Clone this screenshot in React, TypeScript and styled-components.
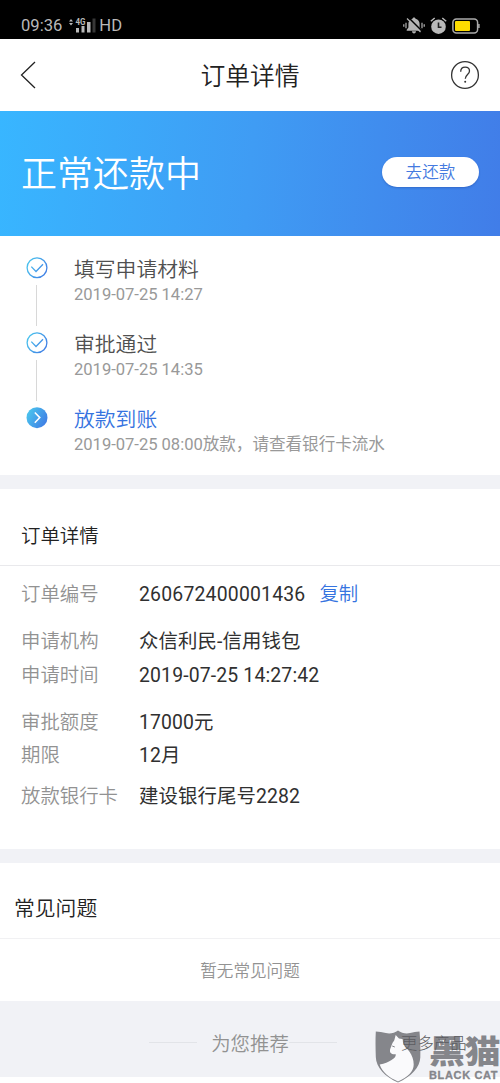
import React from "react";
import styled, { createGlobalStyle } from "styled-components";

const Global = createGlobalStyle`
  * { box-sizing: border-box; }
  html, body { margin: 0; background: #fff; }
  body {
    font-family: Roboto, "Noto Sans CJK SC", sans-serif;
    color: #333;
    overflow: hidden;
  }
  h1, h2, p { margin: 0; font-weight: 400; }
  button { border: 0; background: none; padding: 0; font: inherit; }
  svg { display: block; flex: none; }
`;

const Page = styled.main`
  position: relative;
  width: 500px;
  height: 1083px;
  display: flex;
  flex-direction: column;
  overflow: hidden;
`;

const StatusBar = styled.div`
  height: 39px;
  flex: none;
  background: #000;
  color: #b9b9b9;
  display: flex;
  align-items: center;
  justify-content: space-between;
  padding: 12px 20px 0 21px;
  font-size: 16.6px;
  line-height: 20px;
`;

const StatusGroup = styled.div<{ $gap: number }>`
  display: flex;
  align-items: center;
  gap: ${(p) => p.$gap}px;
`;

const Header = styled.header`
  height: 72px;
  flex: none;
  display: flex;
  align-items: center;
  justify-content: space-between;
  padding: 0 20px;
`;

const HeaderTitle = styled.h1`
  padding-top: 4px;
  font-weight: 350;
  font-size: 24.8px;
  line-height: 36px;
  color: #222;
`;

const IconButton = styled.button`
  width: 30px;
  height: 30px;
  display: flex;
  align-items: center;
`;

const Hero = styled.section`
  height: 125px;
  flex: none;
  display: flex;
  align-items: center;
  justify-content: space-between;
  padding: 0 21px;
  background: linear-gradient(95deg, #38b6ff 0%, #3f9cf4 50%, #417de8 100%);
`;

const HeroTitle = styled.h2`
  padding-top: 3px;
  font-weight: 350;
  font-size: 36px;
  line-height: 50px;
  color: #fff;
`;

const PayButton = styled.button`
  width: 97px;
  height: 30px;
  margin-bottom: 4px;
  padding-top: 2px;
  border-radius: 15px;
  background: #fff;
  color: #447ae0;
  font-size: 16.6px;
  line-height: 28px;
  font-weight: 350;
  box-shadow: 0 1px 2px rgba(30, 70, 160, 0.45);
`;

const Timeline = styled.section`
  height: 239px;
  flex: none;
  padding: 21px 0 0 25.5px;
`;

const Step = styled.div`
  height: 75px;
  display: flex;
  gap: 26.5px;
`;

const StepRail = styled.div`
  width: 22px;
  display: flex;
  flex-direction: column;
  align-items: center;
`;

const RailLine = styled.div`
  width: 1px;
  height: 41px;
  margin-top: 6px;
  background: #d8d8d8;
`;

const StepTitle = styled.p<{ $active?: boolean }>`
  padding-top: 1px;
  font-size: 20.8px;
  line-height: 24px;
  font-weight: 350;
  color: ${(p) => (p.$active ? "#3573e0" : "#505050")};
`;

const StepNote = styled.p`
  margin-top: 2px;
  font-size: 16.6px;
  line-height: 22px;
  letter-spacing: -0.03px;
  color: #999;
`;

const Divider = styled.div`
  height: 14px;
  flex: none;
  background: #f1f2f6;
`;

const SectionTitle = styled.h2<{ $size: number; $inset: number; $top: number; $height: number; $line: string }>`
  height: ${(p) => p.$height}px;
  flex: none;
  display: flex;
  align-items: center;
  padding: ${(p) => p.$top}px 0 0 ${(p) => p.$inset}px;
  font-size: ${(p) => p.$size}px;
  font-weight: 350;
  color: #222;
  border-bottom: 1px solid ${(p) => p.$line};
`;

const Details = styled.section`
  height: 283px;
  flex: none;
  padding: 16px 21px 0;
`;

const DetailRow = styled.div<{ $after: number }>`
  display: flex;
  height: 26px;
  line-height: 26px;
  margin-bottom: ${(p) => p.$after}px;
  font-size: 19.4px;
`;

const DetailLabel = styled.span`
  width: 118px;
  font-weight: 350;
  color: #929292;
`;

const DetailValue = styled.span<{ $spacing: number }>`
  color: #303030;
  letter-spacing: ${(p) => p.$spacing}px;
`;

const CopyButton = styled.button`
  margin-left: 14px;
  font-weight: 350;
  color: #3573e0;
`;

const Empty = styled.div`
  height: 62px;
  flex: none;
  display: flex;
  align-items: center;
  justify-content: center;
  font-size: 16.6px;
  font-weight: 350;
  color: #929292;
`;

const Recommend = styled.section`
  height: 76px;
  flex: none;
  display: flex;
  align-items: center;
  justify-content: center;
  padding-top: 6px;
  background: #f1f2f6;
  font-size: 19.4px;
  font-weight: 350;
  color: #929292;
`;

const Rule = styled.span`
  width: 48px;
  height: 1px;
  background: #e2e4e8;
  margin-right: 14px;
`;

const MoreLink = styled.span`
  position: absolute;
  left: 401px;
  top: 1033px;
  font-size: 16.4px;
  line-height: 22px;
  font-weight: 300;
  color: #5c5c60;
`;

const Watermark = styled.div`
  position: absolute;
  left: 375px;
  top: 1030px;
  display: flex;
  gap: 8px;
  color: #85868b;
`;

const WatermarkText = styled.div`
  display: flex;
  flex-direction: column;
  white-space: nowrap;
`;

const WatermarkName = styled.span`
  font-size: 32px;
  line-height: 38px;
  font-weight: 900;
  font-family: "Noto Sans CJK SC", sans-serif;
  transform: scaleX(1.12);
  transform-origin: left;
`;

const WatermarkLatin = styled.span`
  margin-top: 1px;
  font-family: "Liberation Sans", sans-serif;
  font-weight: 700;
  font-size: 11px;
  line-height: 12px;
  letter-spacing: 0.65px;
  -webkit-text-stroke: 0.3px #85868b;
`;

const SignalIcon = () => (
  <svg width="28" height="17" viewBox="0 0 28 17" fill="#b9b9b9">
    <path d="M0 4.500 2 2 4 4.500ZM0 6 2 8.500 4 6Z" />
    <text x="6.500" y="7.500" fontSize="8.500" fontWeight="700" fontFamily="Roboto" textLength="10" lengthAdjust="spacingAndGlyphs">4G</text>
    <rect x="7" y="11" width="3" height="4.500" />
    <rect x="12.500" y="9" width="3" height="6.500" />
    <rect x="18" y="5" width="3.500" height="10.500" />
    <rect x="23.500" y="1.500" width="3" height="14" fill="#373737" />
  </svg>
);

const MutedBellIcon = () => (
  <svg width="22" height="17" viewBox="0 0 22 17">
    <path d="M11 .5c.9 0 1.500.6 1.500 1.300 2.800.7 4.100 2.700 4.100 5.200v3.500l1.700 2.200v1H3.700v-1l1.700-2.200V7c0-2.500 1.300-4.500 4.100-5.200C9.500 1.100 10.100.5 11 .5ZM9 14.300h4c0 1.300-.9 2.200-2 2.200s-2-.9-2-2.200Z" fill="#b4b4b4" />
    <path d="M5.700.700 18.700 13.700" stroke="#000" strokeWidth="1.500" />
    <path d="M4 1.500 17.500 15" stroke="#b4b4b4" strokeWidth="1.300" />
    <path d="M.8 7.200v2.600M3 5.800v5.400M19 5.800v5.400M21.200 7.200v2.600" stroke="#b4b4b4" strokeWidth="1.200" />
  </svg>
);

const AlarmIcon = () => (
  <svg width="17" height="18" viewBox="0 0 17 18">
    <circle cx="8.500" cy="9.700" r="7.300" fill="#b9b9b9" />
    <path d="M.8 4.300 4.700 1M16.200 4.300 12.300 1" stroke="#b9b9b9" strokeWidth="1.500" />
    <path d="M8.500 5.500v4.700h3" fill="none" stroke="#222" strokeWidth="1.600" />
  </svg>
);

const BatteryIcon = () => (
  <svg width="28" height="16" viewBox="0 0 28 16">
    <rect x=".9" y=".9" width="24.700" height="14.200" rx="3.500" fill="#000" stroke="#aaa" strokeWidth="1.500" />
    <rect x="3" y="3" width="15" height="10" rx="1" fill="#fddc00" />
    <path d="M26.900 6v4" stroke="#aaa" strokeWidth="1.500" />
  </svg>
);

const BackIcon = () => (
  <svg width="16" height="28" viewBox="0 0 16 28">
    <path d="M15 1 1.500 14 15 27" fill="none" stroke="#222" strokeWidth="1.300" />
  </svg>
);

const HelpIcon = () => (
  <svg width="30" height="30" viewBox="0 0 30 30" fill="none" stroke="#333">
    <circle cx="15" cy="15" r="13.400" strokeWidth="1.300" />
    <path d="M10.700 11.700c0-2.800 1.900-4.500 4.500-4.500 2.500 0 4.300 1.600 4.300 3.900 0 3.400-4.200 3.600-4.200 7.700" strokeWidth="1.300" />
    <circle cx="15.200" cy="21.800" r="1" fill="#333" stroke="none" />
  </svg>
);

const StepIcon = ({ id, active }: { id: string; active?: boolean }) => (
  <svg width="22" height="22" viewBox="0 0 22 22" fill="none">
    <defs>
      <linearGradient id={id} x1="0" y1="5" x2="22" y2="17" gradientUnits="userSpaceOnUse">
        <stop stopColor="#4bc8ee" />
        <stop offset="1" stopColor="#3f78e4" />
      </linearGradient>
    </defs>
    {active ? (
      <>
        <circle cx="11" cy="10.700" r="10.500" fill={`url(#${id})`} />
        <path d="m8.800 5.500 5 5.100-5 5.100" stroke="#fff" strokeWidth="1.500" />
      </>
    ) : (
      <>
        <circle cx="11" cy="10.700" r="9.900" stroke={`url(#${id})`} strokeWidth="1.300" />
        <path d="m5.300 9.600 4.700 4.900 7-7.300" stroke={`url(#${id})`} strokeWidth="1.300" />
      </>
    )}
  </svg>
);

const CatShield = () => (
  <svg width="46" height="53" viewBox="0 0 46 53">
    <path d="M23 .5c3.500 2.700 8 3.500 12 2.600 3.500-.7 6-1.500 9.500-1.600.8 9 1 17 .8 26C45 37 36 47 23 52.500 10 47 1 37 .8 27 .6 18 .3 10 .8 1.500c3.500 0 6.500.9 10 1.600 4.200.9 8.700.1 12.200-2.600Z" fill="#85868b" />
    <path d="M20.700 5 24 8.600l3.200.3c.9.300.6 2.300.8 3.600.6 3 4.500 6 6.700 9.500 2.300 3.600 4 7.500 4 12.500 0 7-5.700 12.500-15.700 17C13.500 47.300 7.200 42 4.700 34.500c5.300-.5 8.300-2.500 11.800-4.500 2.700-1.600 4.500-3.200 4.300-5.700-2 .2-4.600-.2-5.500-1.800-.7-1.400-.3-3.300.7-5.500.6-1.400.8-2.800 1.500-4 .9-1.700 1.700-2 2-3.500Z" fill="#fafafc" />
    <path d="m17.200 16 2.600 1" stroke="#85868b" strokeWidth="1" />
  </svg>
);

const steps = [
  { title: "填写申请材料", note: "2019-07-25 14:27" },
  { title: "审批通过", note: "2019-07-25 14:35" },
  { title: "放款到账", note: "2019-07-25 08:00放款，请查看银行卡流水", active: true },
];

const details = [
  { label: "订单编号", value: "260672400001436", after: 21, spacing: 0.2, copy: true },
  { label: "申请机构", value: "众信利民-信用钱包", after: 7.5, spacing: 0.1 },
  { label: "申请时间", value: "2019-07-25 14:27:42", after: 21, spacing: 0.15 },
  { label: "审批额度", value: "17000元", after: 7.5, spacing: 0.1 },
  { label: "期限", value: "12月", after: 14.5, spacing: 0.1 },
  { label: "放款银行卡", value: "建设银行尾号2282", after: 0, spacing: 0.1 },
];

export default function App() {
  return (
    <Page>
      <Global />
      <StatusBar>
        <StatusGroup $gap={7}>
          <span>09:36</span>
          <StatusGroup $gap={2}>
            <SignalIcon />
            <span>HD</span>
          </StatusGroup>
        </StatusGroup>
        <StatusGroup $gap={5}>
          <MutedBellIcon />
          <AlarmIcon />
          <BatteryIcon />
        </StatusGroup>
      </StatusBar>
      <Header>
        <IconButton aria-label="返回"><BackIcon /></IconButton>
        <HeaderTitle>订单详情</HeaderTitle>
        <IconButton aria-label="帮助"><HelpIcon /></IconButton>
      </Header>
      <Hero>
        <HeroTitle>正常还款中</HeroTitle>
        <PayButton>去还款</PayButton>
      </Hero>
      <Timeline>
        {steps.map((s, i) => (
          <Step key={s.title}>
            <StepRail>
              <StepIcon id={`step${i}`} active={s.active} />
              {!s.active && <RailLine />}
            </StepRail>
            <div>
              <StepTitle $active={s.active}>{s.title}</StepTitle>
              <StepNote>{s.note}</StepNote>
            </div>
          </Step>
        ))}
      </Timeline>
      <Divider />
      <SectionTitle $size={19.4} $inset={21} $top={14} $height={77} $line="#e9e9ec">订单详情</SectionTitle>
      <Details>
        {details.map((d) => (
          <DetailRow key={d.label} $after={d.after}>
            <DetailLabel>{d.label}</DetailLabel>
            <DetailValue $spacing={d.spacing}>{d.value}</DetailValue>
            {d.copy && <CopyButton>复制</CopyButton>}
          </DetailRow>
        ))}
      </Details>
      <Divider />
      <SectionTitle $size={20.8} $inset={14} $top={13} $height={76} $line="#f1f1f3">常见问题</SectionTitle>
      <Empty>暂无常见问题</Empty>
      <Recommend>
        <Rule />
        <span>为您推荐</span>
        <Rule />
      </Recommend>
      <Watermark>
        <CatShield />
        <WatermarkText>
          <WatermarkName>黑猫</WatermarkName>
          <WatermarkLatin>BLACK CAT</WatermarkLatin>
        </WatermarkText>
      </Watermark>
      <MoreLink>更多产品</MoreLink>
    </Page>
  );
}
